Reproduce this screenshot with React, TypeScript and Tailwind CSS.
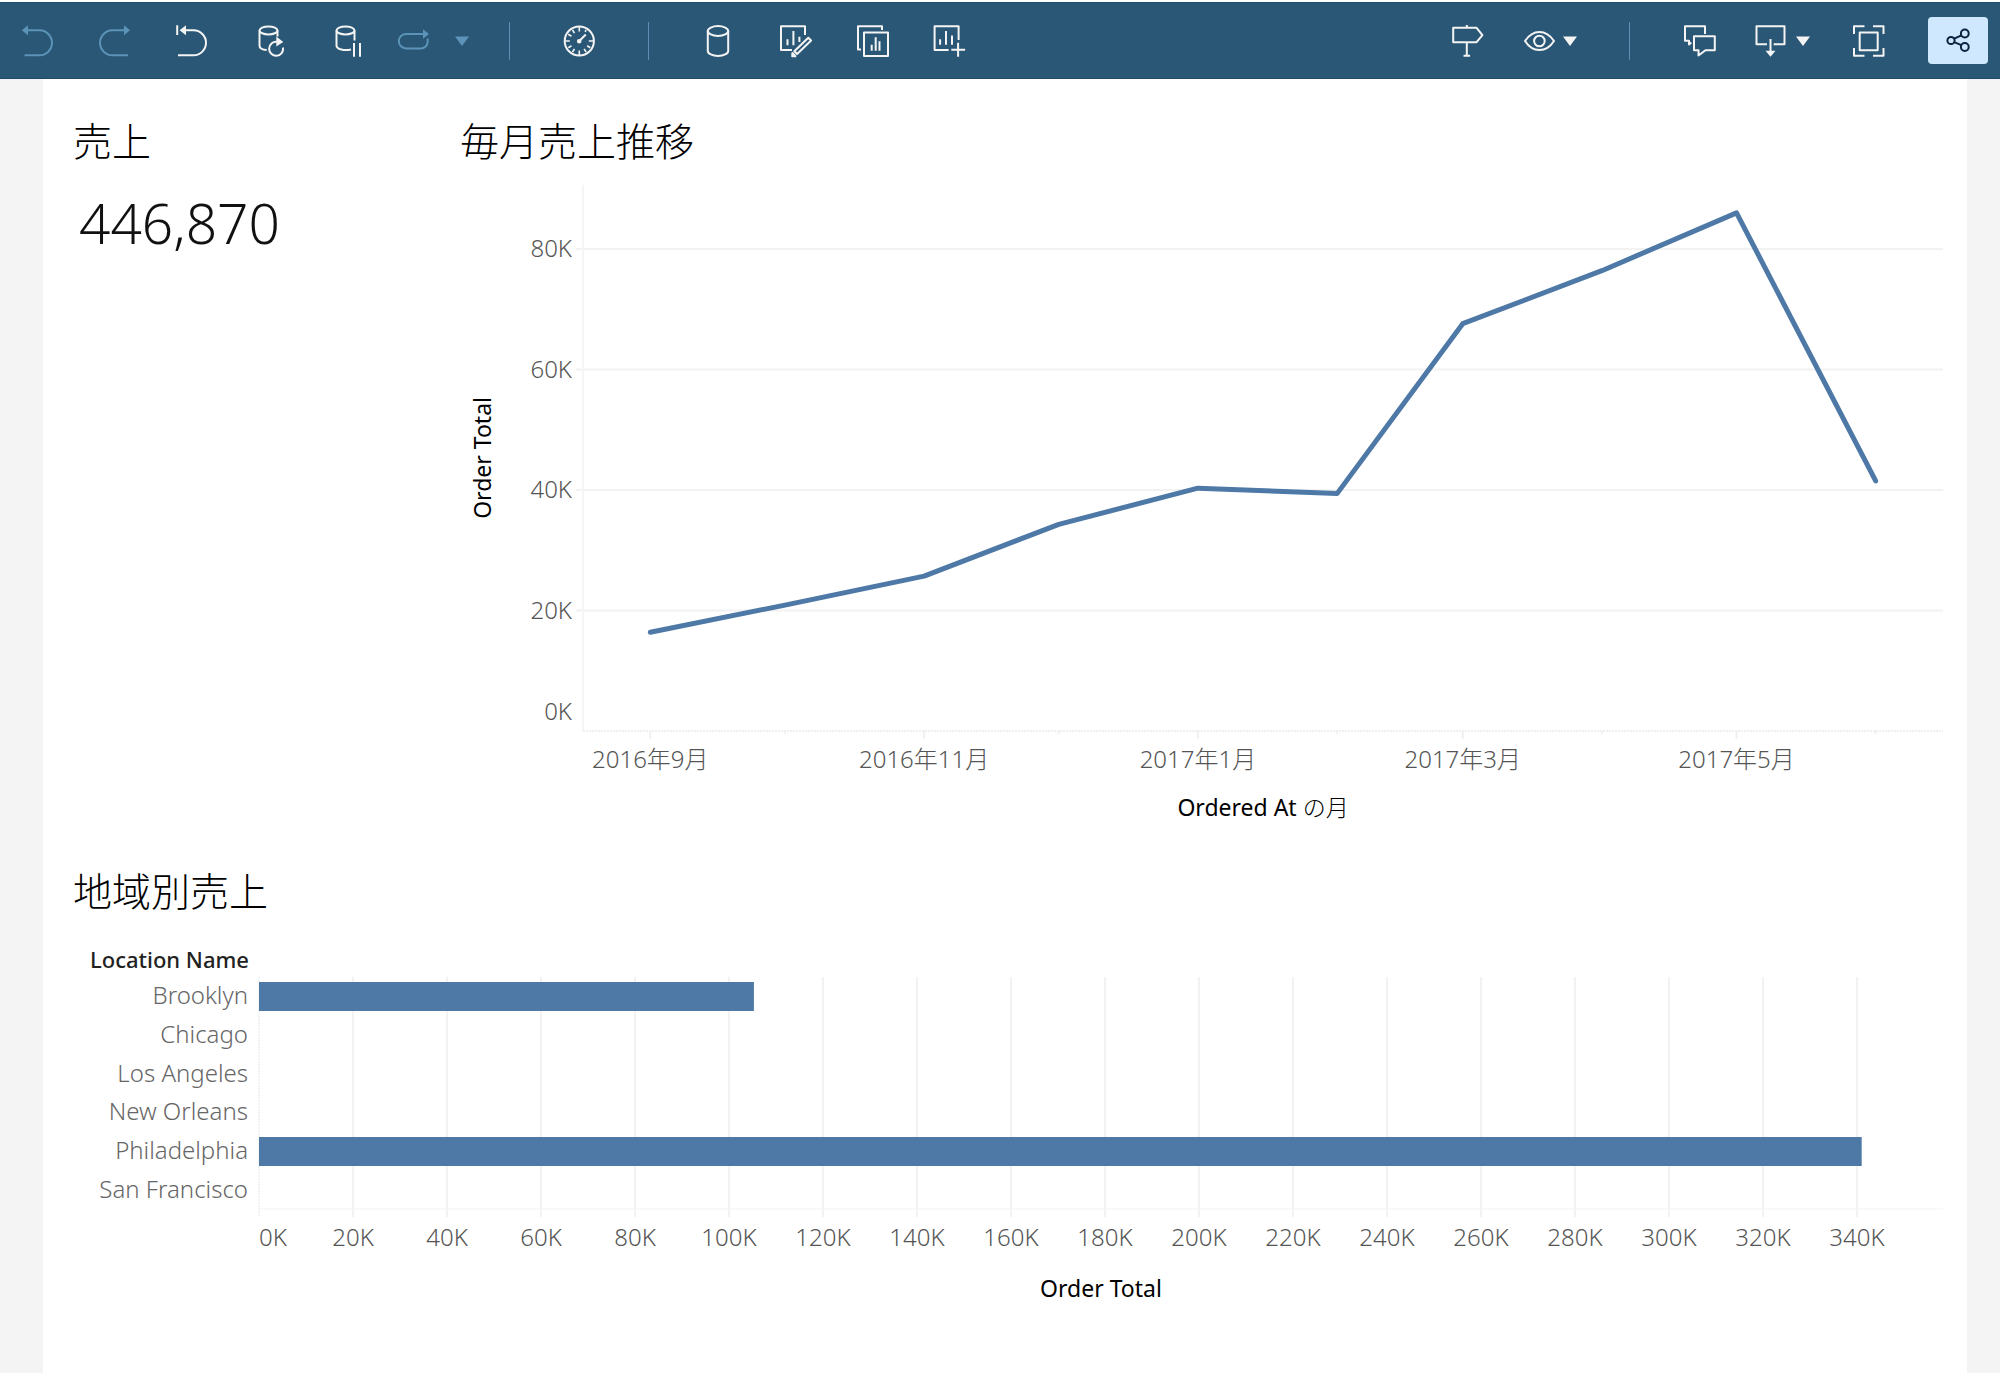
import type { ReactNode } from "react";
import clsx from "clsx";

type IconProps = { children: ReactNode; className?: string };

const Icon = ({ children, className }: IconProps) => (
  <svg
    viewBox="0 0 32 32"
    className={clsx("size-8 shrink-0 overflow-visible", className)}
    fill="none"
    stroke="currentColor"
    strokeWidth={2}
    strokeLinejoin="round"
    aria-hidden="true"
  >
    {children}
  </svg>
);

const Caret = () => (
  <svg viewBox="0 0 14 10" className="w-3.5 h-2.5 shrink-0" aria-hidden="true">
    <path d="M0 0.5h14L7 10z" fill="currentColor" />
  </svg>
);

type ToolButtonProps = {
  label: string;
  disabled?: boolean;
  className?: string;
  children: ReactNode;
};

const ToolButton = ({
  label,
  disabled,
  className,
  children,
}: ToolButtonProps) => (
  <button
    type="button"
    aria-label={label}
    disabled={disabled}
    className={clsx(
      "flex items-center shrink-0",
      disabled ? "text-[#5c93b8]" : "text-[#f4f4f4]",
      className
    )}
  >
    {children}
  </button>
);

const Divider = () => <div className="w-px h-[38px] bg-[#5c8fb3]" />;

const Toolbar = () => (
  <header className="pt-0.5 bg-white">
    <div className="flex items-center justify-between h-[77px] pl-[21px] pr-3 bg-[#2a5775] border-y border-[#1d4c6c]">
      <div className="flex items-center">
        <div className="flex items-center gap-[45px]">
          <ToolButton label="元に戻す" disabled>
            <Icon>
              <path d="M6 5.3h12.5a12.5 12.5 0 0 1 0 25H3.5" />
              <path d="M.8 5.3 7 .3v10z" fill="currentColor" stroke="none" />
            </Icon>
          </ToolButton>
          <ToolButton label="やり直し" disabled>
            <Icon>
              <path d="M27 5.3H14.5a12.5 12.5 0 0 0 0 25H30" />
              <path d="M32 5.3 26 .3v10z" fill="currentColor" stroke="none" />
            </Icon>
          </ToolButton>
          <ToolButton label="元の状態に戻す">
            <Icon>
              <path d="M10 5.3h8.5a12.5 12.5 0 0 1 0 25H3M2.2 .3V10" />
              <path d="M4.6 5.3l6.4-5v10z" fill="currentColor" stroke="none" />
            </Icon>
          </ToolButton>
          <ToolButton label="更新">
            <Icon>
              <ellipse cx="16.5" cy="5.4" rx="9" ry="4" />
              <path d="M7.500 5.400V20.500c0 2.500 2.500 4.200 7.200 4.500M25.500 5.400v6.200" />
              <path d="M31 22.500a7 7 0 1 1-6-5.700" />
              <path d="M24.300 11.600v10l7-4.600z" fill="currentColor" stroke="none" />
            </Icon>
          </ToolButton>
          <ToolButton label="一時停止">
            <Icon>
              <ellipse cx="16.5" cy="5.4" rx="9" ry="4" />
              <path d="M7.500 5.400V20.500c0 4 8 5.400 14.500 4M25.500 5.400V15.500M25 18v13.700M31 18v13.700" />
            </Icon>
          </ToolButton>
        </div>
        <div className="flex items-center ml-9 gap-[26px]">
          <ToolButton label="自動更新" disabled>
            <Icon>
              <path d="M26.500 9H9a7.200 7.200 0 0 0 0 14.400h14.500a7 7 0 0 0 7.200-7V13.500" />
              <path d="M26 4.300v9.400l6-4.700z" fill="currentColor" stroke="none" />
            </Icon>
          </ToolButton>
          <ToolButton label="自動更新のオプション" disabled>
            <Caret />
          </ToolButton>
        </div>
        <div className="flex items-center ml-10 gap-[53px]">
          <Divider />
          <ToolButton label="パフォーマンス">
            <Icon>
              <circle cx="16.3" cy="16" r="14.6" />
              <path
                d="M16.300 2v4.500M16.300 25.500V30M2.300 16h4.500M25.800 16h4.500M9.500 5l2 3.200M23.100 5l-1 1.800M9.500 27l2-3.200M23.100 27l-2-3.200M5.300 9.200l3.200 2M5.300 22.800l3.200-2M27.300 22.800l-3.200-2"
                strokeWidth={1.6}
              />
              <path d="M16.300 16l6.500-6.500" />
              <circle cx="16.2" cy="16.2" r="1.3" fill="currentColor" />
            </Icon>
          </ToolButton>
          <Divider />
        </div>
        <div className="flex items-center ml-[53px] gap-[45px]">
          <ToolButton label="新しいデータソース">
            <Icon>
              <ellipse cx="16" cy="6" rx="10.2" ry="4.9" />
              <path d="M5.800 6v20c0 2.700 4.500 4.900 10.200 4.900s10.200-2.200 10.200-4.900V6" />
            </Icon>
          </ToolButton>
          <ToolButton label="ワークシートの編集">
            <Icon>
              <g transform="translate(1 0)">
                <path d="M25 10V1.300H1V25h11" />
                <path d="M7.500 14.300v6M13.400 6v14.300M19.400 11.700v5.300" />
                <path d="M28.300 12.700l2.800 2.800-14 13.500-2.800-2.800z" />
                <path d="M12.400 28l3 3.200h-3.200z" fill="currentColor" />
              </g>
            </Icon>
          </ToolButton>
          <ToolButton label="シートの複製">
            <Icon>
              <g transform="translate(1 0)">
                <path d="M25 5V1.300H1v23.200h3" />
                <path d="M7 7.500h24V31H7z" />
                <path d="M14.700 19.700v6M18.700 12.300v13.400M22.500 16.300v9.400" />
              </g>
            </Icon>
          </ToolButton>
          <ToolButton label="新しいワークシート">
            <Icon>
              <g transform="translate(.6 0)">
                <path d="M25 15V1.300H1V25h14" />
                <path d="M6.500 14.300v5.500M12.400 6v13.800M18.400 10.500v9.300M24.500 17.700v14M17.700 24.700H31.500" />
              </g>
            </Icon>
          </ToolButton>
        </div>
      </div>

      <div className="flex items-center">
        <ToolButton label="データガイド">
          <Icon>
            <path d="M1.200 2.800h23.400l5.800 7.400-5.800 7H1.200zM14.800 0v2.800M14.800 17.200V31M11.500 30.700h6.600" />
          </Icon>
        </ToolButton>
        <ToolButton label="表示" className="ml-[39px] gap-2">
          <Icon>
            <path d="M2 16C6 9.800 10.700 6.900 16.400 6.900S27 9.800 31 16C27 22.200 22.100 25.100 16.400 25.100S6 22.200 2 16z" />
            <circle cx="16.4" cy="16" r="5.3" />
          </Icon>
          <Caret />
        </ToolButton>
        <div className="flex items-center ml-[52px] gap-[54px]">
          <Divider />
          <ToolButton label="コメント">
            <Icon>
              <path d="M21 9V1.300H1v14.500h4v3.700l2.300-2" />
              <path d="M10 11.200h20.800V25.200H21.500l-7 5.300v-5.300H10z" />
            </Icon>
          </ToolButton>
        </div>
        <ToolButton label="ダウンロード" className="ml-[38px] gap-2.5">
          <Icon>
            <path d="M13 19.300H2.500V1.300h28v18H19.700M16.500 14v13" />
            <path d="M11.500 25.700h10l-5 6z" fill="currentColor" stroke="none" />
          </Icon>
          <Caret />
        </ToolButton>
        <div className="flex items-center ml-[43px] gap-[43px]">
          <ToolButton label="全画面表示">
            <Icon>
              <path d="M1 9V1.300h10.500M20 1.300h10.500V9M30.500 23v7.700H20M11.500 30.700H1V23" />
              <path d="M6.700 7.500h18v17.700h-18z" />
            </Icon>
          </ToolButton>
          <button
            type="button"
            aria-label="共有"
            className="flex items-center justify-center w-[60px] h-[47px] rounded-sm bg-[#cfe8fd] text-[#0c2340]"
          >
            <Icon>
              <circle cx="9" cy="15.5" r="3.6" />
              <circle cx="22.8" cy="8.5" r="3.9" />
              <circle cx="22.8" cy="22" r="3.9" />
              <path d="M12.200 13.700l7.200-3.400M12.200 17.200l7.200 3" />
            </Icon>
          </button>
        </div>
      </div>
    </div>
  </header>
);

const SheetTitle = ({ children }: { children: ReactNode }) => (
  <h2 className="text-[39px] leading-[48px] font-light text-black">
    {children}
  </h2>
);

/* monthly trend, day counts from 2016-09-01, total in thousands */
const MONTHS = [
  { day: 0, total: 16.4, label: "2016年9月" },
  { day: 30, total: 20.9 },
  { day: 61, total: 25.7, label: "2016年11月" },
  { day: 91, total: 34.3 },
  { day: 122, total: 40.3, label: "2017年1月" },
  { day: 153, total: 39.4 },
  { day: 181, total: 67.6, label: "2017年3月" },
  { day: 212, total: 76.4 },
  { day: 242, total: 86, label: "2017年5月" },
  { day: 273, total: 41.5 },
];
const DAY_START = -15;
const DAY_SPAN = 303;
const PLOT_HEIGHT = 546;
const PX_PER_K = 6.025;

const dayPct = (day: number) => ((day - DAY_START) / DAY_SPAN) * 100;
const totalY = (total: number) => PLOT_HEIGHT - total * PX_PER_K;

const TrendChart = () => (
  <figure className="flex items-start mt-5">
    <div className="flex items-center justify-center w-11 h-[546px]">
      <span className="[writing-mode:vertical-rl] rotate-180 text-[23px] leading-8 text-black whitespace-nowrap">
        Order Total
      </span>
    </div>
    <div className="flex-1 pl-[79px]">
      <svg
        className="block w-full h-[596px] overflow-visible text-[24px] font-light"
        role="img"
        aria-label="毎月売上推移"
      >
        {[80, 60, 40, 20].map((k) => (
          <g key={k}>
            <line
              x1={-7}
              x2="100%"
              y1={totalY(k)}
              y2={totalY(k)}
              stroke="#f2f2f2"
              strokeWidth={2}
            />
            <text x={-11} y={totalY(k) + 8} textAnchor="end" fill="#555">
              {k}K
            </text>
          </g>
        ))}
        <text x={-11} y={PLOT_HEIGHT - 11} textAnchor="end" fill="#555">
          0K
        </text>
        <line x1={0} x2={0} y1={0} y2={PLOT_HEIGHT} stroke="#f5f5f5" strokeWidth={2} />
        <line
          x1={0}
          x2="100%"
          y1={PLOT_HEIGHT}
          y2={PLOT_HEIGHT}
          stroke="#efefef"
          strokeWidth={2}
          strokeDasharray="2 1"
        />
        {MONTHS.map(({ day, label }) => (
          <g key={day}>
            <line
              x1={`${dayPct(day)}%`}
              x2={`${dayPct(day)}%`}
              y1={PLOT_HEIGHT}
              y2={PLOT_HEIGHT + (label ? 8 : 3)}
              stroke="#f0f0f0"
              strokeWidth={2}
            />
            {label && (
              <text
                x={`${dayPct(day)}%`}
                y={PLOT_HEIGHT + 37}
                textAnchor="middle"
                fill="#555"
              >
                {label}
              </text>
            )}
          </g>
        ))}
        <svg
          width="100%"
          height={PLOT_HEIGHT}
          viewBox={`0 0 100 ${PLOT_HEIGHT}`}
          preserveAspectRatio="none"
        >
          <polyline
            points={MONTHS.map((m) => `${dayPct(m.day)},${totalY(m.total)}`).join(" ")}
            fill="none"
            stroke="#4e79a7"
            strokeWidth={5}
            strokeLinecap="round"
            strokeLinejoin="round"
            vectorEffect="non-scaling-stroke"
          />
        </svg>
      </svg>
      <figcaption className="mt-2.5 text-center text-[23px] leading-8 text-black">
        Ordered At <span className="font-light">の月</span>
      </figcaption>
    </div>
  </figure>
);

/* sales by location, in thousands */
const LOCATIONS = [
  { name: "Brooklyn", total: 105.3 },
  { name: "Chicago", total: 0 },
  { name: "Los Angeles", total: 0 },
  { name: "New Orleans", total: 0 },
  { name: "Philadelphia", total: 341 },
  { name: "San Francisco", total: 0 },
];
const BAR_MAX = 358.3;
const ROWS_HEIGHT = 232;
const ROW_STEP = ROWS_HEIGHT / LOCATIONS.length;
const BAR_HEIGHT = 29;
const BAR_TICKS = Array.from({ length: 18 }, (_, i) => i * 20);

const barPct = (total: number) => `${(total / BAR_MAX) * 100}%`;

const LocationChart = () => (
  <figure className="mt-[26px]">
    <div className="w-[176px] text-right text-[22px] leading-9 font-medium text-[#222] whitespace-nowrap">
      Location Name
    </div>
    <div className="pl-[186px]">
      <svg
        className="block w-full h-[280px] overflow-visible text-[24px] font-light"
        role="img"
        aria-label="地域別売上"
      >
        {BAR_TICKS.map((k) => (
          <g key={k}>
            <line
              x1={barPct(k)}
              x2={barPct(k)}
              y1={0}
              y2={ROWS_HEIGHT + 8}
              stroke={k ? "#f2f2f2" : "#e4e4e4"}
              strokeWidth={k ? 2 : 1}
              strokeDasharray={k ? undefined : "2 1"}
            />
            <text
              x={barPct(k)}
              y={ROWS_HEIGHT + 37}
              textAnchor={k ? "middle" : "start"}
              fill="#555"
            >
              {k}K
            </text>
          </g>
        ))}
        <line
          x1={0}
          x2="100%"
          y1={ROWS_HEIGHT}
          y2={ROWS_HEIGHT}
          stroke="#f2f2f2"
        />
        {LOCATIONS.map(({ name, total }, i) => (
          <g key={name}>
            <text
              x={-11}
              y={ROW_STEP * (i + 0.5) + 8}
              textAnchor="end"
              fill="#666"
            >
              {name}
            </text>
            <rect
              x={0}
              y={Math.round(ROW_STEP * i + 5)}
              width={barPct(total)}
              height={BAR_HEIGHT}
              fill="#4e79a7"
            />
          </g>
        ))}
      </svg>
      <figcaption className="mt-[15px] text-center text-[23px] leading-8 text-black">
        Order Total
      </figcaption>
    </div>
  </figure>
);

const App = () => (
  <div className="flex flex-col min-h-screen bg-[#f4f4f4] font-['Noto_Sans','Noto_Sans_CJK_JP',sans-serif]">
    <Toolbar />
    <main className="flex-1 ml-[43px] mr-[33px] pt-[38px] pl-[30px] pr-6 bg-white">
      <div className="grid grid-cols-[387px_1fr]">
        <section>
          <SheetTitle>売上</SheetTitle>
          <p className="mt-[22px] pl-1.5 text-[55px] leading-[72px] font-light text-[#111]">
            446,870
          </p>
        </section>
        <section>
          <SheetTitle>毎月売上推移</SheetTitle>
          <TrendChart />
        </section>
      </div>
      <section className="mt-11 pb-8">
        <SheetTitle>地域別売上</SheetTitle>
        <LocationChart />
      </section>
    </main>
  </div>
);

export default App;
